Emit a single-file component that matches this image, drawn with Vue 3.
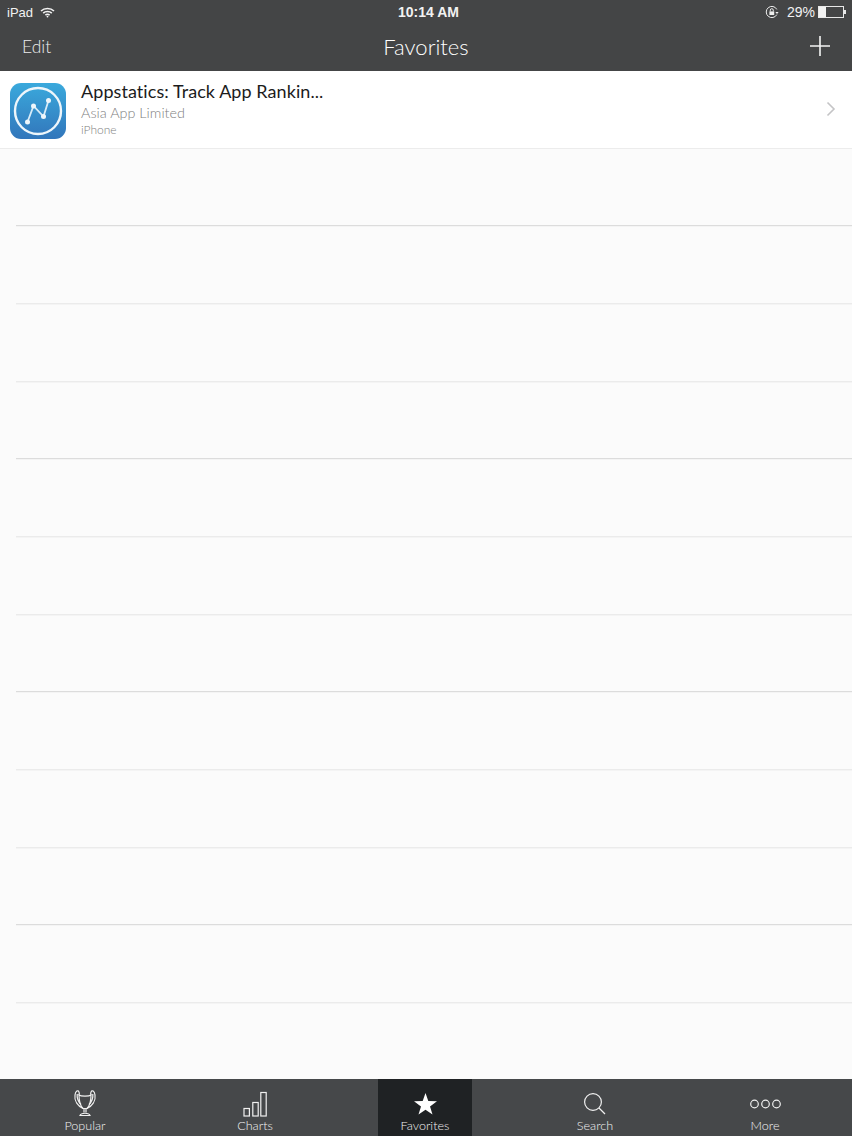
<template>
  <div class="screen">
    <header class="top">
      <div class="status">
        <div class="status-left">
          <span>iPad</span>
          <svg width="15" height="11" viewBox="0 0 15 11" fill="none" stroke="#f2f2f2" stroke-width="1.6">
            <path d="M1 4 C4.5 .6 10.5 .6 14 4" />
            <path d="M3.2 6.2 C5.5 4 9.5 4 11.8 6.2" />
            <path d="M5.4 8.2 C6.6 7.1 8.4 7.1 9.6 8.2" />
            <circle cx="7.5" cy="9.6" r=".9" fill="#f2f2f2" stroke="none" />
          </svg>
        </div>
        <span class="clock">10:14 AM</span>
        <div class="status-right">
          <svg width="14" height="14" viewBox="0 0 14 14" fill="none" stroke="#eee" stroke-width="1">
            <path d="M11.8 9.6 A5.6 5.6 0 1 1 11.8 4.4" />
            <rect x="4.4" y="6.4" width="4.8" height="3.6" fill="#eee" stroke="none" />
            <path d="M5.3 6.4 V5.2 A1.5 1.5 0 0 1 8.3 5.2 V6.4" />
            <path d="M10.4 7 L13.6 7 L12 9 Z" fill="#eee" stroke="none" />
          </svg>
          <span class="pct">29%</span>
          <div class="battery"><div class="battery-fill" :style="{ width: batteryLevel + '%' }"></div></div>
          <div class="battery-tip"></div>
        </div>
      </div>
      <nav class="navbar">
        <span class="edit">Edit</span>
        <span class="title">Favorites</span>
        <svg class="plus" width="22" height="22" viewBox="0 0 22 22" stroke="#f4f4f4" stroke-width="1.6">
          <path d="M11 1 V21 M1 11 H21" />
        </svg>
      </nav>
    </header>

    <main class="list">
      <div class="row app-row">
        <svg class="app-icon" width="56" height="56" viewBox="0 0 56 56">
          <defs>
            <linearGradient id="appBg" x1="0" y1="0" x2="0" y2="1">
              <stop offset="0" stop-color="#3aa9dc" />
              <stop offset="1" stop-color="#3276bb" />
            </linearGradient>
          </defs>
          <rect width="56" height="56" rx="11" fill="url(#appBg)" />
          <circle cx="28" cy="28" r="23" fill="none" stroke="#eef6fb" stroke-width="2.4" />
          <path d="M17.5 39 L23.5 23 L33.5 33.5 L38.5 17.5" fill="none" stroke="#d8ecf8" stroke-width="1.8" />
          <circle cx="17.5" cy="39" r="2.5" fill="#eef6fb" />
          <circle cx="23.5" cy="23" r="2.5" fill="#eef6fb" />
          <circle cx="33.5" cy="33.5" r="2.5" fill="#eef6fb" />
          <circle cx="38.5" cy="17.5" r="2.5" fill="#eef6fb" />
        </svg>
        <div class="app-text">
          <div class="app-name">Appstatics: Track App Rankin...</div>
          <div class="app-dev">Asia App Limited</div>
          <div class="app-device">iPhone</div>
        </div>
        <svg class="chevron" width="10" height="16" viewBox="0 0 10 16" fill="none" stroke="#c4c4c6" stroke-width="1.6">
          <path d="M1.5 1.5 L8 8 L1.5 14.5" />
        </svg>
      </div>
      <div v-for="n in emptyRows" :key="n" class="row"></div>
    </main>

    <footer class="tabs">
      <div v-for="tab in tabs" :key="tab.label" class="tab">
        <div class="tab-inner" :class="{ active: tab.active }">
          <svg width="40" height="30" viewBox="0 0 40 30" fill="none" stroke="#f0f0f0" stroke-width="1.2">
            <template v-if="tab.label === 'Popular'">
              <path d="M18 20.5 C13 18 9 13 10 7 C10.5 3 13 1.5 14 4 C14.6 5.4 14.4 6.2 14 7" />
              <path d="M22 20.5 C27 18 31 13 30 7 C29.5 3 27 1.5 26 4 C25.4 5.4 25.6 6.2 26 7" />
              <path d="M14 7 C16 8.6 24 8.6 26 7 C26 13 24.5 18 22 20.5 H18 C15.5 18 14 13 14 7 Z" />
              <path d="M12.2 6 C11.8 10 13 13.5 16 16.5 M27.8 6 C28.2 10 27 13.5 24 16.5" />
              <path d="M19 20.5 V24.5 M21 20.5 V24.5" />
              <path d="M15 27.5 C16 24.5 24 24.5 25 27.5 Z" />
            </template>
            <template v-else-if="tab.label === 'Charts'">
              <rect x="9" y="20.5" width="5.4" height="7.5" />
              <rect x="17.8" y="14.5" width="5.4" height="13.5" />
              <rect x="25.8" y="4.5" width="5.4" height="23.5" />
            </template>
            <template v-else-if="tab.label === 'Favorites'">
              <path d="M20.5 5 L23.3 13 L32 13.2 L25 18.5 L27.5 26.5 L20.5 21.7 L13.5 26.5 L16 18.5 L9 13.2 L17.7 13 Z" fill="#fff" stroke="none" />
            </template>
            <template v-else-if="tab.label === 'Search'">
              <circle cx="18" cy="14" r="8.4" />
              <path d="M24 20 L30 26" />
            </template>
            <template v-else>
              <circle cx="9.5" cy="16" r="3.8" />
              <circle cx="20.5" cy="16" r="3.8" />
              <circle cx="31.5" cy="16" r="3.8" />
            </template>
          </svg>
          <span class="tab-label">{{ tab.label }}</span>
        </div>
      </div>
    </footer>
  </div>
</template>

<script setup>
const batteryLevel = 29
const emptyRows = 12

const tabs = [
  { label: 'Popular' },
  { label: 'Charts' },
  { label: 'Favorites', active: true },
  { label: 'Search' },
  { label: 'More' }
]
</script>

<style>
html, body {
  margin: 0;
  background: #fbfbfb;
}
</style>

<style scoped>
.screen {
  width: 852px;
  height: 1136px;
  display: flex;
  flex-direction: column;
  overflow: hidden;
  font-family: Lato, "Open Sans", sans-serif;
  background: #fbfbfb;
}

.top {
  height: 71px;
  flex: none;
  background: #444546;
  color: #f2f2f2;
}

.status {
  height: 22px;
  padding: 1px 6px 0 7px;
  display: grid;
  grid-template-columns: 1fr auto 1fr;
  align-items: center;
  font-family: "Liberation Sans", sans-serif;
  font-size: 13px;
}

.status-left {
  display: flex;
  align-items: center;
  gap: 7px;
}

.clock {
  font-weight: bold;
  font-size: 14px;
  margin-left: 4px;
}

.status-right {
  display: flex;
  align-items: center;
  justify-content: flex-end;
}

.pct {
  margin-left: 8px;
  margin-right: 3px;
  font-size: 14px;
}

.battery {
  width: 24px;
  height: 10px;
  border: 1px solid #e8e8e8;
  box-sizing: content-box;
}

.battery-fill {
  height: 100%;
  background: #f2f2f2;
}

.battery-tip {
  width: 2px;
  height: 4px;
  background: #e8e8e8;
}

.navbar {
  height: 49px;
  box-sizing: border-box;
  padding: 0 21px 3px 22px;
  display: flex;
  align-items: center;
  justify-content: space-between;
  position: relative;
}

.edit {
  font-size: 17.5px;
  font-weight: 300;
  color: #ececec;
}

.title {
  position: absolute;
  left: 0;
  right: 0;
  top: 11px;
  text-align: center;
  font-size: 22px;
  line-height: 26px;
  font-weight: 300;
  color: #fff;
  pointer-events: none;
}

.list {
  flex: 1;
  min-height: 0;
  overflow: hidden;
}

.row {
  height: 77.67px;
  box-sizing: border-box;
  margin-left: 16px;
  border-bottom: 1px solid #ebebeb;
  box-shadow: 0 1px 0 #f4f4f4;
}

.row:nth-child(3n + 2) {
  border-bottom-color: #dcdcdc;
}

.app-row {
  margin-left: 0;
  background: #fff;
  display: flex;
  align-items: center;
  padding: 0 16px 0 10px;
  border-bottom-color: #ececec;
  box-shadow: none;
}

.app-icon {
  flex: none;
  margin-top: 3px;
}

.app-text {
  flex: 1;
  margin-left: 15px;
  margin-top: -1px;
}

.app-name {
  font-size: 18px;
  line-height: 22px;
  letter-spacing: 0.07px;
  color: #1c1c1c;
}

.app-dev {
  font-size: 14.4px;
  line-height: 19px;
  margin-top: 1px;
  font-weight: 300;
  color: #808080;
}

.app-device {
  font-size: 12px;
  line-height: 15px;
  font-weight: 300;
  color: #808080;
}

.chevron {
  flex: none;
  margin-top: -1px;
}

.tabs {
  height: 57px;
  flex: none;
  background: #46484a;
  display: grid;
  grid-template-columns: repeat(5, 170px);
}

.tab {
  display: flex;
  justify-content: center;
}

.tab-inner {
  width: 94px;
  display: flex;
  flex-direction: column;
  align-items: center;
  padding-top: 9px;
  box-sizing: border-box;
}

.tab-inner.active {
  background: #1f2224;
}

.tab-label {
  font-size: 12.6px;
  line-height: 15px;
  font-weight: 300;
  color: #f2f2f2;
}
</style>
